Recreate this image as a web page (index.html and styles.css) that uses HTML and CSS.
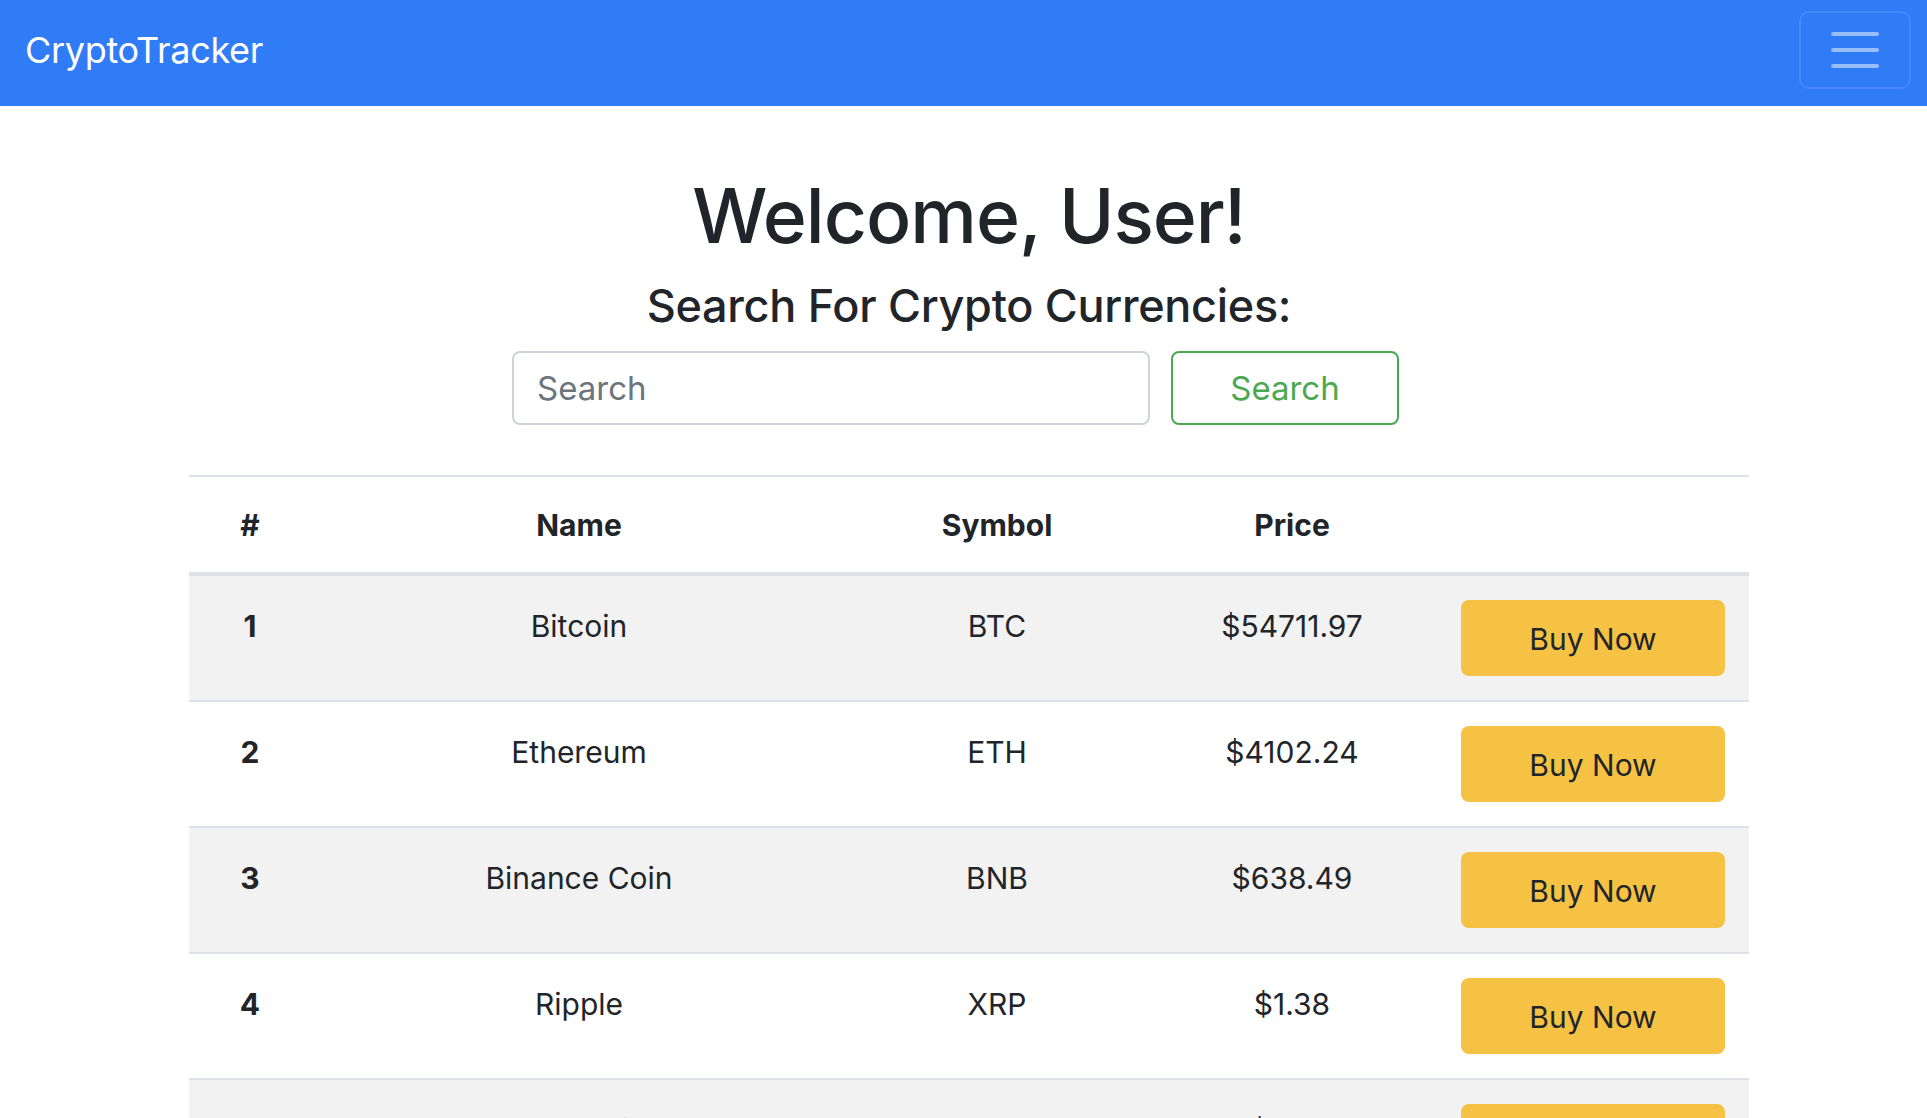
FILE: index.html
```html
<!DOCTYPE html>
<html lang="en">
<head>
<meta charset="utf-8">
<title>CryptoTracker</title>
<link rel="stylesheet" href="styles.css">
</head>
<body>
<nav class="navbar">
  <a class="brand" href="#">CryptoTracker</a>
  <button class="toggler" aria-label="Toggle navigation">
    <span class="bar"></span><span class="bar"></span><span class="bar"></span>
  </button>
</nav>
<main class="container">
  <h1 class="title">Welcome, User!</h1>
  <h2 class="subtitle">Search For Crypto Currencies:</h2>
  <form class="search-row">
    <input class="search-input" type="text" placeholder="Search">
    <button class="search-btn" type="button">Search</button>
  </form>
  <table class="coins">
    <colgroup>
      <col class="c-num"><col class="c-name"><col class="c-sym"><col class="c-price"><col class="c-act">
    </colgroup>
    <thead>
      <tr><th>#</th><th>Name</th><th>Symbol</th><th>Price</th><th></th></tr>
    </thead>
    <tbody>
      <tr><th>1</th><td>Bitcoin</td><td>BTC</td><td>$54711.97</td><td class="act"><button class="buy">Buy Now</button></td></tr>
      <tr><th>2</th><td>Ethereum</td><td>ETH</td><td>$4102.24</td><td class="act"><button class="buy">Buy Now</button></td></tr>
      <tr><th>3</th><td>Binance Coin</td><td>BNB</td><td>$638.49</td><td class="act"><button class="buy">Buy Now</button></td></tr>
      <tr><th>4</th><td>Ripple</td><td>XRP</td><td>$1.38</td><td class="act"><button class="buy">Buy Now</button></td></tr>
      <tr><th>5</th><td>Dogecoin</td><td>DOGE</td><td>$0.43</td><td class="act"><button class="buy">Buy Now</button></td></tr>
    </tbody>
  </table>
</main>
</body>
</html>
```
FILE: styles.css
```css
html, body {
  margin: 0;
  padding: 0;
  background: #ffffff;
}
body {
  font-family: Inter, "Liberation Sans", sans-serif;
  color: #212529;
}
.navbar {
  height: 106px;
  background: #2f7cf6;
  display: flex;
  align-items: flex-start;
  justify-content: space-between;
  padding: 11px 16px 0 25px;
  box-sizing: border-box;
}
.brand {
  color: #ffffff;
  font-size: 36px;
  line-height: 78px;
  font-weight: 400;
  text-decoration: none;
  letter-spacing: -0.3px;
}
.toggler {
  width: 112px;
  height: 78px;
  box-sizing: border-box;
  border: 2px solid rgba(255, 255, 255, 0.1);
  border-radius: 10px;
  background: transparent;
  display: flex;
  flex-direction: column;
  align-items: center;
  justify-content: center;
  gap: 12px;
  padding: 0;
}
.bar {
  display: block;
  width: 48px;
  height: 4px;
  border-radius: 2px;
  background: #98bdfb;
}
.container {
  width: 1560px;
  margin: 0 0 0 189px;
}
.title {
  margin: 65px 0 0;
  text-align: center;
  font-size: 75px;
  font-weight: 500;
  line-height: 1.2;
  letter-spacing: -1px;
}
.subtitle {
  margin: 20px 0 0;
  text-align: center;
  font-size: 45px;
  font-weight: 500;
  line-height: 50px;
  letter-spacing: -0.3px;
}
.search-row {
  display: flex;
  gap: 21px;
  margin: 20px 0 0;
  padding-left: 323px;
}
.search-input {
  width: 638px;
  height: 74px;
  box-sizing: border-box;
  border: 2px solid #ced4da;
  border-radius: 8px;
  padding: 0 23px;
  font-family: inherit;
  font-size: 33px;
  color: #495057;
  outline: none;
}
.search-input::placeholder {
  color: #6c757d;
}
.search-btn {
  width: 228px;
  height: 74px;
  box-sizing: border-box;
  border: 2px solid #4ca850;
  border-radius: 8px;
  background: #ffffff;
  color: #4ca850;
  font-family: inherit;
  font-size: 33px;
  padding: 0;
}
.coins {
  width: 1560px;
  margin-top: 50px;
  border-collapse: collapse;
  table-layout: fixed;
  font-size: 30px;
}
.c-num { width: 122px; }
.c-name { width: 536px; }
.c-sym { width: 300px; }
.c-price { width: 290px; }
.c-act { width: 312px; }
.coins thead th {
  border-top: 2px solid #dee2e6;
  border-bottom: 4px solid #dee2e6;
  padding: 25px 24px 24px;
  line-height: 46px;
  font-weight: 700;
  text-align: center;
}
.coins tbody th,
.coins tbody td {
  border-bottom: 2px solid #dee2e6;
  padding: 24px;
  line-height: 52px;
  text-align: center;
  vertical-align: top;
  font-weight: 400;
}
.coins tbody th {
  font-weight: 700;
}
.coins tbody tr:nth-child(odd) {
  background: #f2f2f2;
}
.coins td.act {
  padding: 24px;
}
.buy {
  display: block;
  width: 264px;
  height: 76px;
  border: none;
  border-radius: 8px;
  background: #f6c244;
  color: #212529;
  font-family: inherit;
  font-size: 30px;
  padding: 2px 0 0;
}
```
